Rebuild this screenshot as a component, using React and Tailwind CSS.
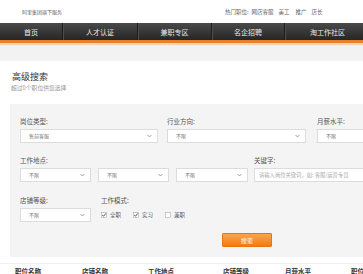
import React from "react";

function Chevron() {
  return (
    <svg width="5" height="4" viewBox="0 0 5 4" className="shrink-0">
      <path d="M0.6 1 L2.5 3 L4.4 1" fill="none" stroke="#999" strokeWidth="0.9" />
    </svg>
  );
}

function Select({ text, w, className = "" }) {
  return (
    <div
      className={`h-[14px] bg-white border border-[#dcdcdc] flex items-center justify-between pl-[8px] pr-[5px] ${className}`}
      style={{ width: w }}
    >
      <span className="text-[5px] leading-[6px] text-[#777]">{text}</span>
      <Chevron />
    </div>
  );
}

function Check({ checked, label, className = "" }) {
  return (
    <div className={`flex items-center ${className}`}>
      <svg width="6" height="6" viewBox="0 0 6 6">
        <rect x="0.5" y="0.5" width="5" height="5" fill="#fff" stroke="#aaa" strokeWidth="0.6" />
        {checked && <path d="M1.3 3 L2.5 4.3 L4.8 1.4" fill="none" stroke="#444" strokeWidth="0.9" />}
      </svg>
      <span className="ml-[3px] text-[5.5px] leading-[6px] text-[#555]">{label}</span>
    </div>
  );
}

function Label({ children, className = "" }) {
  return <div className={`text-[6.5px] leading-[8px] text-[#555] ${className}`}>{children}</div>;
}

export default function App() {
  const navItems = [
    { t: "首页", w: 62 },
    { t: "人才认证", w: 75 },
    { t: "兼职专区", w: 74 },
    { t: "名企招聘", w: 73 },
    { t: "淘工作社区", w: 86 },
  ];
  return (
    <div className="w-[363px] h-[274px] overflow-hidden bg-white font-['Noto_Sans_CJK_SC',sans-serif]">
      {/* top bar */}
      <div className="h-[23px] flex items-center text-[#666]">
        <span className="ml-[22px] text-[5px] leading-[6px]">阿里集团旗下服务</span>
        <div className="ml-[163px] flex items-center text-[5.5px] leading-[6px]">
          <span>热门职位:</span>
          <span className="ml-[3px]">网店客服</span>
          <span className="ml-[5px]">美工</span>
          <span className="ml-[6px]">推广</span>
          <span className="ml-[5px]">店长</span>
        </div>
      </div>
      {/* nav */}
      <div className="h-[17px] bg-gradient-to-b from-[#4a4a4a] to-[#262626] flex whitespace-nowrap">
        {navItems.map((n, i) => (
          <div
            key={n.t}
            className={`shrink-0 flex items-center justify-center text-[7px] leading-[8px] text-[#e8e8e8] ${i > 0 ? "border-l border-[#1c1c1c] shadow-[inset_1px_0_0_#4d4d4d]" : ""}`}
            style={{ width: n.w }}
          >
            {n.t}
          </div>
        ))}
      </div>
      <div className="h-[3px] bg-[#f07d22]" />
      <div className="h-[2px] bg-[#fbd5b3]" />
      {/* gray band */}
      <div className="h-[16px] bg-[#f2f2f2]" />
      {/* content */}
      <div className="pl-[10px] pt-[10px]">
        <div className="pl-[2px] text-[9px] leading-[12px] text-[#333]">高级搜索</div>
        <div className="pl-[1px] mt-[1px] text-[5.8px] leading-[8px] text-[#999]">超过0个职位供您选择</div>
        <div className="mt-[12px] w-[500px] bg-[#f4f4f4] pl-[10px] pt-[13px] pb-[10px]">
          {/* row 1 */}
          <div className="flex">
            <div>
              <Label>岗位类型:</Label>
              <Select text="售前客服" w={138} className="mt-[4px]" />
            </div>
            <div className="ml-[9px]">
              <Label>行业方向:</Label>
              <Select text="不限" w={139} className="mt-[4px]" />
            </div>
            <div className="ml-[11px]">
              <Label>月薪水平:</Label>
              <Select text="不限" w={139} className="mt-[4px]" />
            </div>
          </div>
          {/* row 2 */}
          <div className="flex mt-[13px]">
            <div>
              <Label>工作地点:</Label>
              <div className="flex mt-[4px]">
                <Select text="不限" w={71} />
                <Select text="不限" w={71} className="ml-[7px]" />
                <Select text="不限" w={72} className="ml-[7px]" />
              </div>
            </div>
            <div className="ml-[6px]">
              <Label>关键字:</Label>
              <div className="mt-[4px] h-[14px] w-[200px] bg-white border border-[#dcdcdc] flex items-center pl-[4px]">
                <span className="text-[5.3px] leading-[6px] text-[#aaa]">请输入岗位关键词，如: 客服/运营专员</span>
              </div>
            </div>
          </div>
          {/* row 3 */}
          <div className="flex mt-[14px]">
            <div>
              <Label>店铺等级:</Label>
              <Select text="不限" w={71} className="mt-[4px]" />
            </div>
            <div className="ml-[10px]">
              <Label>工作模式:</Label>
              <div className="mt-[4px] h-[14px] flex items-center">
                <Check checked label="全职" />
                <Check checked label="实习" className="ml-[12px]" />
                <Check label="兼职" className="ml-[12px]" />
              </div>
            </div>
          </div>
          {/* button */}
          <div className="mt-[11px] ml-[202px] w-[50px] h-[14px] rounded-[1px] bg-gradient-to-b from-[#fba548] to-[#f27a10] border border-[#e8750f] flex items-center justify-center">
            <span className="text-[6px] leading-[7px] text-white">搜索</span>
          </div>
        </div>
      </div>
      {/* table header */}
      <div className="mt-[6px] border-t border-[#f0f0f0] h-[14px] flex items-center text-[6.5px] leading-[8px] font-bold text-[#333] whitespace-nowrap">
        <span className="ml-[15px] w-[67px] shrink-0">职位名称</span>
        <span className="w-[66px] shrink-0">店铺名称</span>
        <span className="w-[75px] shrink-0">工作地点</span>
        <span className="w-[62px] shrink-0">店铺等级</span>
        <span className="w-[66px] shrink-0">月薪水平</span>
        <span className="shrink-0">职位发布</span>
      </div>
    </div>
  );
}
